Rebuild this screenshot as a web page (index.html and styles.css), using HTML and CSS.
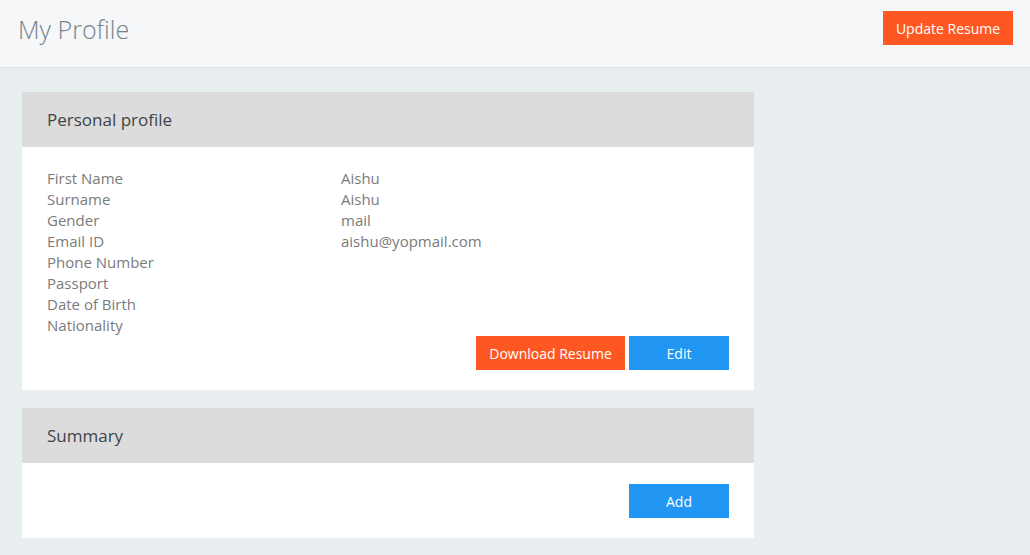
FILE: index.html
```html
<!DOCTYPE html>
<html>
<head>
<meta charset="utf-8">
<link rel="stylesheet" href="styles.css">
</head>
<body>
<header class="topbar">
  <h1 class="title">My Profile</h1>
  <button class="btn btn-orange btn-update">Update Resume</button>
</header>
<main class="content">
  <section class="card">
    <div class="card-head">Personal profile</div>
    <div class="card-body">
      <dl class="fields">
        <dt>First Name</dt><dd>Aishu</dd>
        <dt>Surname</dt><dd>Aishu</dd>
        <dt>Gender</dt><dd>mail</dd>
        <dt>Email ID</dt><dd>aishu@yopmail.com</dd>
        <dt>Phone Number</dt><dd></dd>
        <dt>Passport</dt><dd></dd>
        <dt>Date of Birth</dt><dd></dd>
        <dt>Nationality</dt><dd></dd>
      </dl>
      <div class="actions">
        <button class="btn btn-orange btn-download">Download Resume</button>
        <button class="btn btn-blue btn-wide">Edit</button>
      </div>
    </div>
  </section>
  <section class="card">
    <div class="card-head">Summary</div>
    <div class="card-body">
      <div class="actions">
        <button class="btn btn-blue btn-wide">Add</button>
      </div>
    </div>
  </section>
</main>
</body>
</html>
```
FILE: styles.css
```css
* { box-sizing: border-box; }
html, body { margin: 0; padding: 0; }
body {
  font-family: "Open Sans", "Liberation Sans", sans-serif;
  background: #e9eef1;
  width: 1030px;
  height: 555px;
  overflow: hidden;
}
.topbar {
  height: 68px;
  background: #f5f7f9;
  border-bottom: 1px solid #dde3e6;
  display: flex;
  align-items: center;
  justify-content: space-between;
  padding: 0 17px 0 18px;
}
.title {
  margin: 0;
  font-size: 25px;
  font-weight: 300;
  color: #76838c;
  margin-top: -10px;
}
.btn {
  border: none;
  font-family: "Open Sans", "Liberation Sans", sans-serif;
  font-size: 14px;
  color: #fff;
  height: 34px;
  padding: 0;
  cursor: pointer;
}
.btn-orange { background: #ff5722; }
.btn-blue { background: #2196f3; }
.btn-update { width: 130px; margin-top: -11px; }
.btn-download { width: 149px; }
.btn-wide { width: 100px; }
.content {
  padding: 24px 22px;
  display: flex;
  flex-direction: column;
  gap: 18px;
  width: 776px;
}
.card {
  background: #fff;
  width: 732px;
}
.card-head {
  background: #dcdcdc;
  height: 55px;
  padding: 0 25px;
  display: flex;
  align-items: center;
  font-size: 17px;
  color: #3e4448;
}
.card-body {
  padding: 21px 25px 20px 25px;
}
.fields {
  margin: 0;
  display: grid;
  grid-template-columns: 294px 1fr;
  font-size: 15px;
  line-height: 21px;
  color: #7a7b7c;
}
.fields dt, .fields dd { margin: 0; min-height: 21px; }
.actions {
  display: flex;
  justify-content: flex-end;
  gap: 4px;
}
```
